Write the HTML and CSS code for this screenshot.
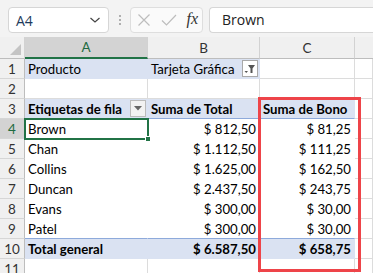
FILE: index.html
```html
<!DOCTYPE html>
<html lang="es">
<head>
<meta charset="utf-8">
<link rel="stylesheet" href="styles.css">
</head>
<body>
<div class="toolbar">
  <div class="namebox">
    <span class="nb-text">A4</span>
    <svg class="chev" width="12" height="8" viewBox="0 0 12 8"><path d="M1.5 2 L6 6 L10.5 2" fill="none" stroke="#444" stroke-width="1.2"/></svg>
  </div>
  <div class="dots"><span></span><span></span><span></span></div>
  <div class="fbtns">
    <svg width="14" height="14" viewBox="0 0 14 14"><path d="M1.5 1.5 L12.5 12.5 M12.5 1.5 L1.5 12.5" stroke="#bdbdbd" stroke-width="1.2" fill="none"/></svg>
    <svg width="16" height="14" viewBox="0 0 16 14"><path d="M1 7.5 L5.5 12 L15 2" stroke="#bdbdbd" stroke-width="1.2" fill="none"/></svg>
    <span class="fx">fx</span>
  </div>
  <div class="finput">Brown</div>
</div>

<div class="sheet">
  <div class="corner"><span class="tri"></span></div>
  <div class="ch sel">A</div>
  <div class="ch">B</div>
  <div class="ch">C</div>
  <div class="ch last"></div>

  <div class="rh">1</div>
  <div class="c blue">Producto</div>
  <div class="c blue flt">Tarjeta Gráfica<span class="fbtn"><svg width="12" height="12" viewBox="0 0 12 12"><path d="M4 2 H11 L8.5 5.5 V10 H6.5 V5.5 Z" fill="#555"/><path d="M0.5 8 H4 L2.25 10 Z" fill="#555"/></svg></span></div>
  <div class="c"></div>
  <div class="c"></div>

  <div class="rh">2</div>
  <div class="c"></div>
  <div class="c"></div>
  <div class="c"></div>
  <div class="c"></div>

  <div class="rh">3</div>
  <div class="c blue hd b flt">Etiquetas de fila<span class="dbtn"><svg width="8" height="5" viewBox="0 0 8 5"><path d="M0 0 H8 L4 4.5 Z" fill="#666"/></svg></span></div>
  <div class="c blue hd b">Suma de Total</div>
  <div class="c blue hd b">Suma de Bono</div>
  <div class="c"></div>

  <div class="rh sel">4</div>
  <div class="c p">Brown</div>
  <div class="c p r">$ 812,50</div>
  <div class="c p r">$ 81,25</div>
  <div class="c"></div>

  <div class="rh">5</div>
  <div class="c p">Chan</div>
  <div class="c p r">$ 1.112,50</div>
  <div class="c p r">$ 111,25</div>
  <div class="c"></div>

  <div class="rh">6</div>
  <div class="c p">Collins</div>
  <div class="c p r">$ 1.625,00</div>
  <div class="c p r">$ 162,50</div>
  <div class="c"></div>

  <div class="rh">7</div>
  <div class="c p">Duncan</div>
  <div class="c p r">$ 2.437,50</div>
  <div class="c p r">$ 243,75</div>
  <div class="c"></div>

  <div class="rh">8</div>
  <div class="c p">Evans</div>
  <div class="c p r">$ 300,00</div>
  <div class="c p r">$ 30,00</div>
  <div class="c"></div>

  <div class="rh">9</div>
  <div class="c p">Patel</div>
  <div class="c p r">$ 300,00</div>
  <div class="c p r">$ 30,00</div>
  <div class="c"></div>

  <div class="rh">10</div>
  <div class="c blue tot b">Total general</div>
  <div class="c blue tot b r">$ 6.587,50</div>
  <div class="c blue tot b r">$ 658,75</div>
  <div class="c"></div>

  <div class="rh">11</div>
  <div class="c"></div>
  <div class="c"></div>
  <div class="c"></div>
  <div class="c"></div>

  <div class="selbox"><span class="handle"></span></div>
  <div class="redbox"></div>
</div>
</body>
</html>
```

FILE: styles.css
```css
* { box-sizing: border-box; }
html, body { margin: 0; padding: 0; }
body {
  width: 373px;
  height: 273px;
  overflow: hidden;
  background: #ffffff;
  font-family: Lato, "Liberation Sans", sans-serif;
}

.toolbar {
  height: 37px;
  background: #f3f3f3;
  display: flex;
  align-items: flex-start;
  padding: 7px 0 0 8px;
  font-family: "Open Sans", "Noto Sans", sans-serif;
}
.namebox {
  width: 101px;
  height: 26px;
  background: #fff;
  border: 1px solid #d6d6d6;
  border-radius: 4px;
  display: flex;
  align-items: center;
  justify-content: space-between;
  padding: 0 7px 0 7px;
}
.nb-text { font-size: 14px; color: #1e3a5c; }
.dots {
  width: 21px;
  height: 26px;
  display: flex;
  flex-direction: column;
  align-items: center;
  justify-content: center;
  gap: 2px;
}
.dots span { width: 2px; height: 2px; background: #999; border-radius: 1px; }
.fbtns {
  width: 73px;
  height: 26px;
  background: #fafafa;
  border: 1px solid #dedede;
  border-radius: 4px;
  display: flex;
  align-items: center;
  justify-content: space-between;
  padding: 0 4px 0 6px;
}
.fx {
  font-family: "Liberation Serif", "DejaVu Serif", serif;
  font-style: italic;
  font-size: 16px;
  color: #333;
  margin-bottom: 2px;
}
.finput {
  margin-left: 6px;
  flex: 1;
  height: 26px;
  background: #fff;
  border: 1px solid #d6d6d6;
  border-right: none;
  border-radius: 4px 0 0 4px;
  font-size: 14px;
  color: #222;
  padding-left: 12px;
  line-height: 24px;
}

.sheet {
  position: relative;
  display: grid;
  grid-template-columns: 25px 123px 112px 95px 18px;
  grid-template-rows: 22px repeat(11, 20px);
  font-size: 13.2px;
  color: #000;
}
.corner {
  background: #f0f0f0;
  border-right: 1px solid #d2d2d2;
  border-bottom: 1px solid #bdbdbd;
  position: relative;
}
.tri {
  position: absolute;
  right: 3px;
  bottom: 3px;
  width: 0; height: 0;
  border-left: 11px solid transparent;
  border-bottom: 11px solid #c4c4c4;
}
.ch {
  background: #f0f0f0;
  border-right: 1px solid #d2d2d2;
  border-bottom: 1px solid #bdbdbd;
  display: flex;
  align-items: center;
  justify-content: center;
  color: #333;
  font-size: 13.5px;
}
.ch.last { border-right: none; }
.ch.sel {
  background: #d3d3d3;
  color: #1e6b41;
  border-bottom: 2px solid #217346;
}
.rh {
  background: #f0f0f0;
  border-right: 1px solid #bdbdbd;
  border-bottom: 1px solid #d6d6d6;
  display: flex;
  align-items: center;
  justify-content: center;
  color: #333;
  font-size: 13.5px;
}
.rh.sel { background: #d3d3d3; color: #1e6b41; }

.c {
  border-right: 1px solid #dcdcdc;
  border-bottom: 1px solid #dcdcdc;
  padding: 0 3px;
  display: flex;
  align-items: center;
  white-space: nowrap;
  overflow: hidden;
}
.c.r { justify-content: flex-end; }
.c.b { font-weight: 700; }
.c.blue { background: #dae2f2; border-right-color: #dae2f2; border-bottom-color: #dae2f2; }
.c.hd { border-bottom: 1px solid #8eaadb; }
.c.tot { border-top: 1px solid #8eaadb; margin-top: -1px; }
.c.p { background: #fff; border-color: #fff; }
.c.flt { justify-content: space-between; padding-right: 1px; }

.fbtn {
  width: 16px;
  height: 17px;
  border: 1px solid #a9a9a9;
  background: #fff;
  display: flex;
  align-items: center;
  justify-content: center;
}
.dbtn {
  width: 16px;
  height: 17px;
  border: 1px solid #bbbbbb;
  background: #f2f2f2;
  display: flex;
  align-items: center;
  justify-content: center;
}

.selbox {
  position: absolute;
  left: 24px;
  top: 81px;
  width: 125px;
  height: 22px;
  border: 2px solid #217346;
}
.handle {
  position: absolute;
  right: -4px;
  bottom: -4px;
  width: 6px;
  height: 6px;
  background: #217346;
  border: 1px solid #fff;
}
.redbox {
  position: absolute;
  left: 258px;
  top: 60px;
  width: 103px;
  height: 175px;
  border: 3px solid #ee4449;
}
```
